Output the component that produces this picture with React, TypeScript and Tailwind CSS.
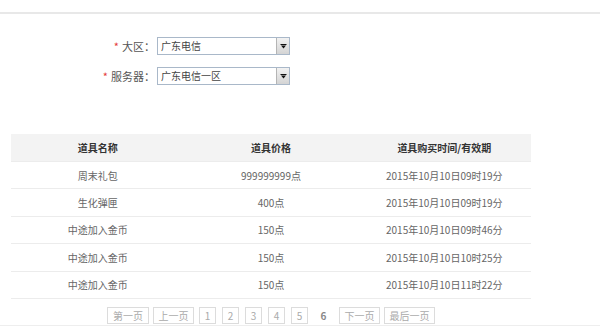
import { ReactNode } from 'react'

const rows = [
  { name: '周末礼包', price: '999999999点', time: '2015年10月10日09时19分' },
  { name: '生化弹匣', price: '400点', time: '2015年10月10日09时19分' },
  { name: '中途加入金币', price: '150点', time: '2015年10月10日09时46分' },
  { name: '中途加入金币', price: '150点', time: '2015年10月10日10时25分' },
  { name: '中途加入金币', price: '150点', time: '2015年10月10日11时22分' },
]

const FakeSelect = ({ value }: { value: string }) => (
  <div className="flex h-[18px] w-[133px] items-stretch border border-[#a9b8c9] bg-white">
    <span className="flex-1 truncate pl-[3px] text-[10px] leading-[16px] text-[#444]">{value}</span>
    <span className="flex w-[13px] items-center justify-center border-l border-[#b5b5b5] bg-gradient-to-b from-[#f2f2f2] to-[#d4d4d4]">
      {/* tiny arrow */}
      <svg width="7" height="5" viewBox="0 0 7 5">
        <rect x="0.5" y="0" width="6" height="1" fill="#111" />
        <path d="M1 1.5 L6 1.5 L3.5 4.5 Z" fill="#111" />
      </svg>
    </span>
  </div>
)

const FormRow = ({ label, children }: { label: string; children: ReactNode }) => (
  <div className="flex items-center">
    <div className="w-[155px] text-right text-[11px] text-[#555]">
      <span className="mr-[3px] text-[#e4393c]">*</span>
      {label}
    </div>
    <div className="ml-[2px]">{children}</div>
  </div>
)

const PageBtn = ({ children, w }: { children: ReactNode; w: string }) => (
  <span className={`flex h-[17px] ${w} items-center justify-center border border-[#dcdcdc] text-[10px] text-[#aaa]`}>
    {children}
  </span>
)

export default function App() {
  return (
    <div className="h-[336px] w-[600px] overflow-hidden bg-white" style={{ fontFamily: '"Noto Sans CJK SC", "Liberation Sans", sans-serif' }}>
      {/* top rule */}
      <div className="h-[14px] border-b-2 border-[#e8e8e8]" />

      {/* server picker */}
      <div className="mt-[23px] flex flex-col gap-[12px]">
        <FormRow label="大区：">
          <FakeSelect value="广东电信" />
        </FormRow>
        <FormRow label="服务器：">
          <FakeSelect value="广东电信一区" />
        </FormRow>
      </div>

      {/* item table */}
      <div className="ml-[11px] mt-[49px] w-[520px]">
        <div className="grid h-[27px] grid-cols-3 items-center bg-[#f3f3f3] text-center text-[10px] font-bold text-[#333]">
          <span>道具名称</span>
          <span>道具价格</span>
          <span>道具购买时间/有效期</span>
        </div>
        {rows.map((r, i) => (
          <div key={i} className="grid h-[27.4px] grid-cols-3 items-center border-t border-[#ececec] text-center text-[10px] text-[#666]">
            <span>{r.name}</span>
            <span>{r.price}</span>
            <span>{r.time}</span>
          </div>
        ))}
        <div className="border-t border-[#ececec]" />
      </div>

      {/* pagination */}
      <div className="ml-[107px] mt-[8px] flex items-center">
        <PageBtn w="w-[42px]">第一页</PageBtn>
        <span className="ml-[4px]"><PageBtn w="w-[41px]">上一页</PageBtn></span>
        <div className="ml-[5px] flex gap-[6px]">
          <PageBtn w="w-[17px]">1</PageBtn>
          <PageBtn w="w-[17px]">2</PageBtn>
          <PageBtn w="w-[17px]">3</PageBtn>
          <PageBtn w="w-[17px]">4</PageBtn>
          <PageBtn w="w-[17px]">5</PageBtn>
          <span className="flex h-[17px] w-[19px] items-center justify-center text-[10px] font-bold text-[#888]">6</span>
        </div>
        <span className="ml-[6px]"><PageBtn w="w-[41px]">下一页</PageBtn></span>
        <span className="ml-[4px]"><PageBtn w="w-[51px]">最后一页</PageBtn></span>
      </div>

      {/* bottom rule */}
      <div className="mt-[1px] border-t border-[#eeeeee]" />
    </div>
  )
}
